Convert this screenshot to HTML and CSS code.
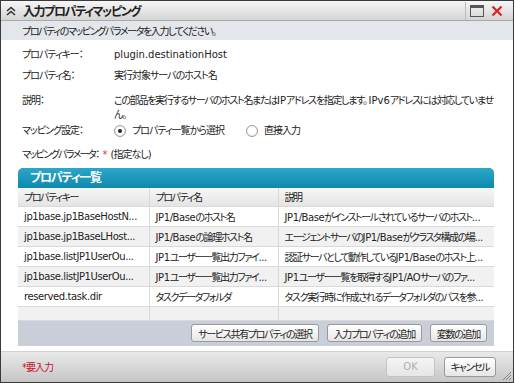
FILE: index.html
```html
<!DOCTYPE html>
<html lang="ja">
<head>
<meta charset="utf-8">
<link rel="stylesheet" href="styles.css">
</head>
<body>
<div class="window">
  <div class="titlebar">
    <svg class="collapse" width="10" height="10" viewBox="0 0 10 10"><path d="M1 5 L5 1.5 L9 5 M1 9 L5 5.5 L9 9" fill="none" stroke="#333" stroke-width="1.6"/></svg>
    <span class="title">入力プロパティマッピング</span>
    <span class="spacer"></span>
    <span class="sep"></span>
    <svg class="maxi" width="14" height="12" viewBox="0 0 14 12"><rect x="0.5" y="0.5" width="13" height="11" fill="none" stroke="#555"/><rect x="1" y="1" width="12" height="2" fill="#555"/></svg>
    <svg class="close" width="12" height="12" viewBox="0 0 12 12"><path d="M1.5 1.5 L10.5 10.5 M10.5 1.5 L1.5 10.5" stroke="#d42a2a" stroke-width="2.4"/></svg>
  </div>
  <div class="subhead">プロパティのマッピングパラメータを入力してください。</div>
  <div class="form">
    <div class="row r1"><span class="label">プロパティキー：</span><span class="value en">plugin.destinationHost</span></div>
    <div class="row r2"><span class="label">プロパティ名：</span><span class="value">実行対象サーバのホスト名</span></div>
    <div class="row r3"><span class="label">説明：</span><span class="value desc">この部品を実行するサーバのホスト名または<span class="en">IP</span>アドレスを指定します。 <span class="en">IPv6</span>アドレスには対応していませ<br>ん。</span></div>
    <div class="row r4"><span class="label">マッピング設定：</span><span class="value radios"><span class="radio on"></span><span class="rtext">プロパティ一覧から選択</span><span class="radio"></span><span class="rtext">直接入力</span></span></div>
    <div class="row r5"><span class="label2">マッピングパラメータ：</span><span class="req">*</span><span>(指定なし)</span></div>
  </div>
  <div class="panel">
    <div class="panel-head">プロパティ一覧</div>
    <table class="grid">
      <colgroup><col class="c1"><col class="c2"><col class="c3"></colgroup>
      <thead><tr><th>プロパティキー</th><th>プロパティ名</th><th>説明</th></tr></thead>
      <tbody>
        <tr><td class="en">jp1base.jp1BaseHostN...</td><td><span class="en">JP1/Base</span>のホスト名</td><td><span class="en">JP1/Base</span>がインストールされているサーバのホスト<span class="en">...</span></td></tr>
        <tr class="alt"><td class="en">jp1base.jp1BaseLHost...</td><td><span class="en">JP1/Base</span>の論理ホスト名</td><td>エージェントサーバの<span class="en">JP1/Base</span>がクラスタ構成の場<span class="en">...</span></td></tr>
        <tr><td class="en">jp1base.listJP1UserOu...</td><td><span class="en">JP1</span>ユーザー一覧出力ファイ<span class="en">...</span></td><td>認証サーバとして動作している<span class="en">JP1/Base</span>のホスト上<span class="en">...</span></td></tr>
        <tr class="alt"><td class="en">jp1base.listJP1UserOu...</td><td><span class="en">JP1</span>ユーザー一覧出力ファイ<span class="en">...</span></td><td><span class="en">JP1</span>ユーザー一覧を取得する<span class="en">JP1/AO</span>サーバのファ<span class="en">...</span></td></tr>
        <tr><td class="en">reserved.task.dir</td><td>タスクデータフォルダ</td><td>タスク実行時に作成されるデータフォルダのパスを参<span class="en">...</span></td></tr>
        <tr class="alt empty"><td></td><td></td><td></td></tr>
      </tbody>
    </table>
    <div class="toolbar">
      <button class="btn">サービス共有プロパティの選択</button>
      <button class="btn">入力プロパティの追加</button>
      <button class="btn">変数の追加</button>
    </div>
  </div>
  <div class="footer">
    <span class="reqnote">*要入力</span>
    <span class="spacer"></span>
    <button class="btn fbtn ok" disabled><span class="en">OK</span></button>
    <button class="btn fbtn">キャンセル</button>
    <svg class="grip" width="10" height="10" viewBox="0 0 10 10"><path d="M9 1 L1 9 M9 4 L4 9 M9 7 L7 9" stroke="#888" stroke-width="1"/></svg>
  </div>
</div>
</body>
</html>
```
FILE: styles.css
```css
* { box-sizing: border-box; }
html, body { margin: 0; padding: 0; background: #fff; }
body {
  font-family: "DejaVu Sans", "Noto Sans CJK JP", sans-serif;
  font-size: 10px;
  letter-spacing: -1px;
  color: #222;
  font-feature-settings: "palt" 1;
}
.en { letter-spacing: 0; }
.window {
  width: 514px;
  height: 383px;
  border: 1px solid #3a3a3a;
  display: flex;
  flex-direction: column;
  position: relative;
  background: #fff;
}
.titlebar {
  height: 20px;
  flex: none;
  display: flex;
  align-items: center;
  background: linear-gradient(#f6f6f6, #d4d4d4);
  border-bottom: 1px solid #a9a9a9;
  padding-left: 5px;
}
.collapse { margin-right: 7px; }
.title { font-size: 12px; font-weight: bold; color: #222; letter-spacing: -1.4px; }
.spacer { flex: 1; }
.sep { width: 1px; height: 18px; background: #f8f8f8; border-left: 1px solid #bdbdbd; margin-right: 4px; }
.maxi { margin-right: 7px; }
.close { margin-right: 10px; }
.subhead {
  height: 19px;
  flex: none;
  background: #e3e6eb;
  display: flex;
  align-items: center;
  padding-left: 21px;
  color: #222;
  letter-spacing: -1.4px;
}
.form { padding: 8px 0 0 21px; }
.row { display: flex; line-height: 14px; white-space: nowrap; }
.label { width: 92px; flex: none; }
.label2 { flex: none; letter-spacing: -1.6px; }
.desc { letter-spacing: -1.3px; }
.desc .en { letter-spacing: 0; }
.r2 { margin-top: 7px; }
.r3 { margin-top: 11px; }
.r4 { margin-top: 2px; align-items: center; height: 14px; }
.r5 { margin-top: 10px; }
.radios { display: flex; align-items: center; }
.radio {
  width: 12px; height: 12px; border-radius: 50%;
  border: 1px solid #9a9a9a;
  background: radial-gradient(circle at 50% 40%, #fff 40%, #e4e4e4 100%);
  position: relative;
  margin-left: 0;
  margin-right: 6px;
}
.radio.on::after {
  content: ""; position: absolute; left: 3px; top: 3px;
  width: 4px; height: 4px; border-radius: 50%; background: #222;
}
.rtext { margin-right: 22px; }
.req { color: #e0304a; margin: 0 3px 0 4px; letter-spacing: 0; }
.panel {
  margin: 6px 0 0 17px;
  width: 476px;
  flex: none;
  background: #c9ced8;
  border-radius: 5px 5px 0 0;
}
.panel-head {
  height: 20px;
  border-radius: 5px 5px 0 0;
  background: linear-gradient(#2ba7c9, #0f88ad);
  color: #fff;
  font-size: 12px;
  font-weight: bold;
  letter-spacing: -1.2px;
  line-height: 20px;
  padding-left: 12px;
}
.grid {
  width: 476px;
  border-collapse: collapse;
  table-layout: fixed;
  background: #fff;
}
.c1 { width: 131px; }
.c2 { width: 129px; }
.c3 { width: 216px; }
.grid th, .grid td {
  height: 20px;
  padding: 0 6px;
  border: 1px solid #d9d9d9;
  text-align: left;
  font-weight: normal;
  white-space: nowrap;
  overflow: hidden;
  color: #222;
  letter-spacing: -1.4px;
}
.grid td.en, .grid .en { letter-spacing: -0.4px; }
.grid th {
  height: 18px;
  background: linear-gradient(#f6f6f6, #e4e4e4);
  border-top: none;
}
.grid tr.alt td { background: #f1f1f1; }
.grid tr.empty td { height: 14px; }
.grid th:first-child, .grid td:first-child { border-left: none; }
.grid th:last-child, .grid td:last-child { border-right: none; }
.toolbar {
  height: 25px;
  display: flex;
  justify-content: flex-end;
  align-items: center;
  gap: 8px;
  padding-right: 7px;
}
.btn {
  font-family: "DejaVu Sans", "Noto Sans CJK JP", sans-serif;
  font-feature-settings: "palt" 1;
  font-size: 10px;
  letter-spacing: -1.3px;
  color: #222;
  height: 18px;
  padding: 0 6px;
  border: 1px solid #999;
  border-radius: 3px;
  background: linear-gradient(#ffffff, #e6e6e6);
}
.footer {
  margin-top: 5px;
  flex: 1;
  display: flex;
  align-items: center;
  background: linear-gradient(#e9e9e9, #c6c6c6);
  border-top: 1px solid #d0d0d0;
  padding-left: 21px;
  position: relative;
}
.reqnote { color: #c8102e; }
.fbtn { height: 20px; margin-right: 9px; }
.ok { width: 49px; color: #b0b0b0; border-color: #c4c4c4; background: linear-gradient(#f4f4f4, #e6e6e6); }
.fbtn + .fbtn { width: 52px; margin-right: 17px; padding: 0; }
.grip { position: absolute; right: 1px; bottom: 1px; }
```
